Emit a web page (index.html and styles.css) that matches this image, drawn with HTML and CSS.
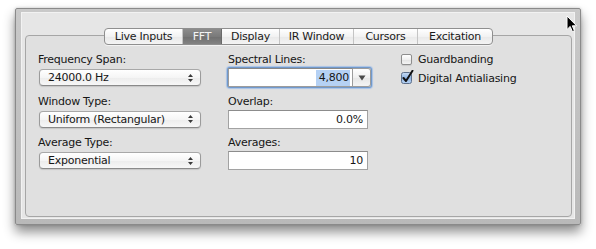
FILE: index.html
```html
<!DOCTYPE html>
<html>
<head>
<meta charset="utf-8">
<link rel="stylesheet" href="styles.css">
</head>
<body>
<div class="window">
  <div class="content">
    <div class="tabbar">
      <div class="tab">Live Inputs</div>
      <div class="tab selected">FFT</div>
      <div class="tab">Display</div>
      <div class="tab">IR Window</div>
      <div class="tab">Cursors</div>
      <div class="tab last">Excitation</div>
    </div>
    <div class="tabbox">
      <div class="col col-popups">
        <div class="group">
          <div class="label">Frequency Span:</div>
          <div class="ctl"><div class="popup"><span>24000.0 Hz</span><svg class="updown" width="7" height="10" viewBox="0 0 7 10"><path d="M3.5 1 L6 4 H1 Z M3.5 9 L6 6 H1 Z" fill="#3a3a3a"/></svg></div></div>
        </div>
        <div class="group">
          <div class="label">Window Type:</div>
          <div class="ctl"><div class="popup"><span>Uniform (Rectangular)</span><svg class="updown" width="7" height="10" viewBox="0 0 7 10"><path d="M3.5 1 L6 4 H1 Z M3.5 9 L6 6 H1 Z" fill="#3a3a3a"/></svg></div></div>
        </div>
        <div class="group">
          <div class="label">Average Type:</div>
          <div class="ctl"><div class="popup"><span>Exponential</span><svg class="updown" width="7" height="10" viewBox="0 0 7 10"><path d="M3.5 1 L6 4 H1 Z M3.5 9 L6 6 H1 Z" fill="#3a3a3a"/></svg></div></div>
        </div>
      </div>
      <div class="col col-fields">
        <div class="group">
          <div class="label">Spectral Lines:</div>
          <div class="ctl"><div class="combo"><div class="combo-text"><span class="sel">4,800</span></div><div class="combo-btn"><svg width="8" height="6" viewBox="0 0 8 6"><path d="M0.5 0.5 H7.5 L4 5.5 Z" fill="#4a4a4a"/></svg></div></div></div>
        </div>
        <div class="group">
          <div class="label">Overlap:</div>
          <div class="ctl"><div class="textfield">0.0%</div></div>
        </div>
        <div class="group">
          <div class="label">Averages:</div>
          <div class="ctl"><div class="textfield">10</div></div>
        </div>
      </div>
      <div class="col col-checks">
        <div class="check"><span class="box"></span><span>Guardbanding</span></div>
        <div class="check"><svg class="box-checked" width="14" height="14" viewBox="0 0 14 14"><defs><linearGradient id="cg" x1="0" y1="0" x2="0" y2="1"><stop offset="0" stop-color="#c9dcf3"/><stop offset="0.5" stop-color="#8fb4e3"/><stop offset="1" stop-color="#b7d2f2"/></linearGradient></defs><rect x="0.5" y="2.5" width="10" height="11" rx="2" fill="url(#cg)" stroke="#5d6f8a"/><path d="M2.5 8 L5 11 L11.5 0.8" fill="none" stroke="#111" stroke-width="2" stroke-linecap="round" stroke-linejoin="round"/></svg><span>Digital Antialiasing</span></div>
      </div>
    </div>
  </div>
</div>
<svg class="cursor" width="12" height="18" viewBox="0 0 12 18"><path d="M1 1 V14.5 L4.2 11.4 L6.4 16.6 L8.4 15.8 L6.3 10.8 H10.6 Z" fill="#000" stroke="#fff" stroke-width="1"/></svg>
</body>
</html>
```
FILE: styles.css
```css
html, body {
  margin: 0;
  padding: 0;
  background: #ffffff;
}
body {
  width: 596px;
  height: 249px;
  overflow: hidden;
  position: relative;
  font-family: "DejaVu Sans", sans-serif;
  font-size: 11px;
  letter-spacing: -0.25px;
  color: #161616;
}
.window {
  margin: 8px 0 0 15px;
  width: 566px;
  height: 217px;
  box-sizing: border-box;
  border: 1px solid #8a8a8a;
  border-radius: 2px;
  background: linear-gradient(#c9c9c9, #b9b9b9);
  padding: 3px 5px 5px 5px;
  box-shadow: 0 7px 12px rgba(0,0,0,0.45), 0 0 3px rgba(0,0,0,0.2);
}
.content {
  height: 100%;
  box-sizing: border-box;
  border: 1px solid #f2f2f2;
  background: #e6e6e6;
  padding: 15px 2px 1px 3px;
  display: flex;
  flex-direction: column;
}
.tabbar {
  align-self: center;
  position: relative;
  z-index: 1;
  margin-bottom: -10px;
  display: grid;
  grid-template-columns: 78px 39px 58px 74px 64px 74px;
  height: 17px;
  box-sizing: border-box;
  border: 1px solid #8f8f8f;
  border-radius: 4px;
  background: linear-gradient(#ffffff, #f2f2f2 50%, #e9e9e9 51%, #f4f4f4);
  overflow: hidden;
  box-shadow: 0 1px 0 rgba(255,255,255,0.6);
}
.tab {
  line-height: 15px;
  text-align: center;
  border-right: 1px solid #c4c4c4;
  color: #1a1a1a;
}
.tab.last { border-right: none; }
.tab.selected {
  background: linear-gradient(#8c8c8c, #7a7a7a 50%, #6f6f6f 51%, #828282);
  color: #f4f4f4;
  border-right-color: #6a6a6a;
}
.tabbox {
  flex: 1;
  border: 1px solid #a6a6a6;
  border-radius: 4px;
  background: #e0e0e0;
  padding: 17px 0 0 12px;
  display: flex;
}
.col {
  display: flex;
  flex-direction: column;
}
.col-popups { width: 163px; gap: 7.5px; }
.col-fields { width: 144px; margin-left: 27px; gap: 7.5px; }
.col-checks { margin-left: 29px; margin-top: -1px; }
.group {
  display: flex;
  flex-direction: column;
  gap: 2px;
}
.label {
  height: 13px;
  line-height: 13px;
  white-space: nowrap;
}
.ctl {
  height: 19px;
  display: flex;
  align-items: center;
}
.popup {
  margin-left: 1px;
  width: 162px;
  height: 17px;
  box-sizing: border-box;
  border: 1px solid #9b9b9b;
  border-top-color: #a8a8a8;
  border-bottom-color: #8a8a8a;
  border-radius: 4px;
  background: linear-gradient(#ffffff, #f5f5f5 50%, #ececec 51%, #f7f7f7);
  display: flex;
  align-items: center;
  padding: 0 6px 0 8px;
  box-shadow: 0 1px 1px rgba(0,0,0,0.12);
  white-space: nowrap;
}
.popup span { flex: 1; line-height: 15px; }
.updown { display: block; }
.combo {
  width: 143px;
  height: 19px;
  box-sizing: border-box;
  display: flex;
  border-radius: 2px;
  box-shadow: 0 0 0 1px #7199cc, 0 0 1px 2px #a8c3e6;
}
.combo-text {
  flex: 1;
  background: #ffffff;
  border: 1px solid #9c9c9c;
  border-top-color: #888888;
  text-align: right;
  line-height: 17px;
  padding-right: 2px;
}
.sel {
  background: #b5d1f4;
  padding: 1px 1px 2px 3px;
}
.combo-btn {
  width: 18px;
  box-sizing: border-box;
  border: 1px solid #9c9c9c;
  border-left: none;
  border-radius: 0 3px 3px 0;
  background: linear-gradient(#ffffff, #f0f0f0 50%, #e6e6e6 51%, #f4f4f4);
  display: flex;
  align-items: center;
  justify-content: center;
}
.textfield {
  width: 140px;
  height: 19px;
  box-sizing: border-box;
  background: #ffffff;
  border: 1px solid #a2a2a2;
  border-top-color: #8c8c8c;
  text-align: right;
  line-height: 17px;
  padding-right: 4px;
}
.check {
  display: flex;
  align-items: center;
  gap: 6px;
  height: 14px;
  margin-bottom: 5px;
  white-space: nowrap;
}
.box {
  width: 11px;
  height: 11px;
  box-sizing: border-box;
  border: 1px solid #8e8e8e;
  border-radius: 2px;
  background: linear-gradient(#ffffff, #f0f0f0 50%, #e2e2e2 51%, #f4f4f4);
  box-shadow: 0 1px 1px rgba(0,0,0,0.1);
}
.box-checked {
  display: block;
  margin-top: -3px;
  margin-right: -3px;
}
.cursor {
  position: absolute;
  left: 566px;
  top: 15px;
}
```
